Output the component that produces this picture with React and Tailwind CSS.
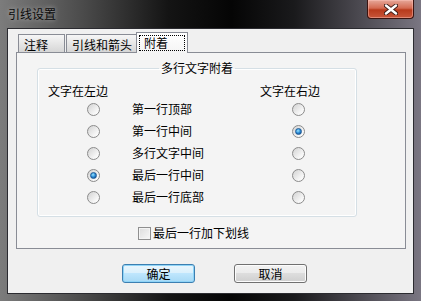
import React from 'react';

const font = { fontFamily: '"Noto Sans CJK SC", "Noto Sans", sans-serif' };

const Radio = ({ checked }) => (
  <div className="w-[13px] h-[13px] rounded-full border border-[#8b8b8b] bg-[linear-gradient(135deg,#d2d2d2,#f6f6f6_70%,#ffffff)] flex items-center justify-center">
    {checked && (
      <div className="w-[7px] h-[7px] rounded-full bg-[radial-gradient(circle_at_40%_35%,#9ae6ff,#2a8ad6_50%,#0c3d78)] border border-[#1e5a96]" />
    )}
  </div>
);

const Button = ({ children, isDefault }) => (
  <button
    className={
      'w-[73px] h-[19px] rounded-[3px] border text-[12px] leading-[14px] text-black flex items-center justify-center ' +
      (isDefault
        ? 'border-[#3c7fb1] bg-[linear-gradient(#eaf6fd,#d9f0fc_50%,#bee6fd_50%,#a7d9f5)] shadow-[inset_0_0_0_1px_#8fd4f7]'
        : 'border-[#707070] bg-[linear-gradient(#f2f2f2,#ebebeb_50%,#dddddd_50%,#cfcfcf)] shadow-[inset_0_0_0_1px_#fcfcfc]')
    }
  >
    {children}
  </button>
);

const rows = [
  { label: '第一行顶部', left: false, right: false },
  { label: '第一行中间', left: false, right: true },
  { label: '多行文字中间', left: false, right: false },
  { label: '最后一行中间', left: true, right: false },
  { label: '最后一行底部', left: false, right: false },
];

export default function App() {
  return (
    <div
      className="w-[421px] h-[301px] overflow-hidden flex flex-col bg-[linear-gradient(90deg,#7c7c7c,#4a4a4a_20%,#141414_40%,#050505_55%,#1a1a1c_70%,#7a7682)] select-none"
      style={font}
    >
      {/* title bar */}
      <div className="h-[28px] flex items-start">
        <span className="ml-[8px] mt-[7px] text-[12px] leading-[14px] text-[#0a0a0a] [text-shadow:0_0_5px_rgba(255,255,255,0.55)]">
          引线设置
        </span>
        <div className="ml-auto mr-[7px] w-[47px] h-[19px] rounded-b-[4px] border border-t-0 border-[#3b1410] bg-[linear-gradient(#e6a89a,#d46a52_45%,#b83a1c_55%,#c8563a)] shadow-[inset_0_0_0_1px_rgba(255,200,190,0.45)] flex items-center justify-center">
          <svg width="14" height="11" viewBox="0 0 14 11">
            <path d="M2 1.5 L12 9.5 M12 1.5 L2 9.5" stroke="#3a1a16" strokeWidth="4.2" strokeLinecap="round" />
            <path d="M2 1.5 L12 9.5 M12 1.5 L2 9.5" stroke="#ffffff" strokeWidth="2.4" strokeLinecap="round" />
          </svg>
        </div>
      </div>

      {/* client area */}
      <div className="mx-[7px] h-[266px] border border-[#2b2b30] bg-[#f0f0f0] flex flex-col text-black">
        {/* tabs */}
        <div className="h-[20px] mt-[3px] ml-[10px] flex items-end text-[12px] leading-[14px]">
          <div className="w-[47px] h-[18px] border border-b-0 border-[#898c95] bg-[linear-gradient(#f6f6f6,#e6e6e6_50%,#d6d6d6)] pl-[5px] pt-[3px]">
            注释
          </div>
          <div className="ml-[1px] w-[71px] h-[18px] border border-b-0 border-[#898c95] bg-[linear-gradient(#f6f6f6,#e6e6e6_50%,#d6d6d6)] pl-[5px] pt-[3px]">
            引线和箭头
          </div>
          <div className="relative z-10 -ml-[1px] -mb-[1px] w-[52px] h-[21px] border border-b-0 border-[#898c95] bg-[linear-gradient(#ffffff,#f4f4f4)] pl-[2px] pt-[2px]">
            <div className="w-[46px] h-[16px] border border-dotted border-black pl-[4px] leading-[14px]">附着</div>
          </div>
        </div>

        {/* tab panel */}
        <div className="ml-[8px] w-[390px] h-[197px] border border-[#898c95] bg-[#f4f4f4] flex flex-col text-[12px] leading-[14px]">
          <fieldset className="ml-[20px] mt-[8px] w-[320px] border border-[#d5dfe5] rounded-[3px] pt-[9px] pb-[8px] shadow-[inset_0_0_0_1px_#ffffff]">
            <legend className="mx-auto px-[2px] leading-[14px]">多行文字附着</legend>
            <div className="flex h-[14px]">
              <span className="ml-[10px]">文字在左边</span>
              <span className="ml-[152px]">文字在右边</span>
            </div>
            {rows.map((r) => (
              <div key={r.label} className="grid grid-cols-[94px_160px_1fr] h-[22px] items-center">
                <div className="flex justify-end pr-[32px]">
                  <Radio checked={r.left} />
                </div>
                <span>{r.label}</span>
                <div className="flex">
                  <Radio checked={r.right} />
                </div>
              </div>
            ))}
          </fieldset>

          <div className="ml-[121px] mt-[9px] flex items-center gap-[2px]">
            <div className="w-[13px] h-[13px] border border-[#8f8f8f] bg-[linear-gradient(135deg,#dcdcdc,#f8f8f8)] shadow-[inset_0_0_0_1px_#f4f4f4]" />
            <span>最后一行加下划线</span>
          </div>
        </div>

        {/* buttons */}
        <div className="mt-[15px] ml-[114px] flex gap-[39px]">
          <Button isDefault>确定</Button>
          <Button>取消</Button>
        </div>
      </div>
    </div>
  );
}
